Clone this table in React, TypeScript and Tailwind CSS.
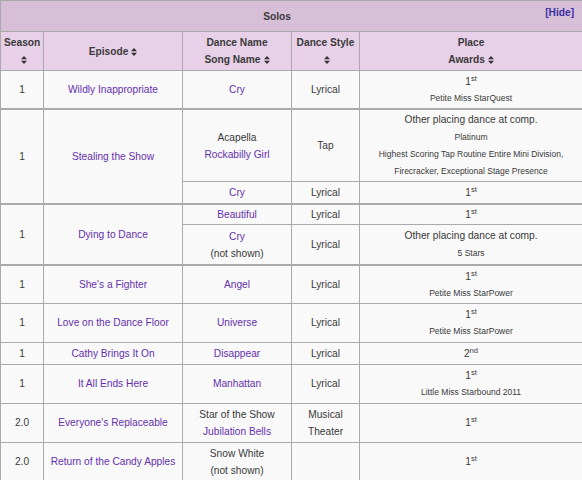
import React from "react";

const Sort = () => (
  <svg width="6" height="8" viewBox="0 0 6 8" className="inline-block align-[-1px] ml-[3px]">
    <polygon points="0,3.3 3,0 6,3.3" fill="#333" />
    <polygon points="0,4.7 6,4.7 3,8" fill="#333" />
  </svg>
);

const L = ({ children }: { children: React.ReactNode }) => (
  <span className="text-[#6530ad]">{children}</span>
);

const Sm = ({ children }: { children: React.ReactNode }) => (
  <div className="text-[8.5px] leading-[17px]">{children}</div>
);

const td = "border border-[#aaa] px-[4px] py-[2px] text-center align-middle";
const tdt = "border border-[#aaa] px-[4px] py-[1px] text-center align-middle";
const th = "border border-[#aaa] px-[3px] py-[2px] text-center align-middle font-bold bg-[#e8d1e8]";

export default function App() {
  return (
    <div className="w-[582px] bg-white" style={{ fontFamily: '"Liberation Sans", Arial, sans-serif' }}>
      <table className="w-[582px] table-fixed border-collapse bg-[#f9f9f9] text-[10.2px] leading-[17px] text-[#3a3a3a]">
        <colgroup>
          <col className="w-[43px]" />
          <col className="w-[139px]" />
          <col className="w-[109px]" />
          <col className="w-[68px]" />
          <col className="w-[223px]" />
        </colgroup>
        <thead>
          <tr className="h-[31px]">
            <th colSpan={5} className="border border-[#aaa] bg-[#d8bfd8] px-[8px] pt-[6px] pb-[6px] text-center font-bold">
              <span className="float-right mt-[-4px] text-[#3b2fa3]">[Hide]</span>
              Solos
            </th>
          </tr>
          <tr className="h-[39px]">
            <th className={th}>
              Season
              <br />
              <Sort />
            </th>
            <th className={th}>
              Episode
              <Sort />
            </th>
            <th className={th}>
              Dance Name
              <br />
              Song Name
              <Sort />
            </th>
            <th className={th}>
              Dance Style
              <br />
              <Sort />
            </th>
            <th className={th}>
              Place
              <br />
              Awards
              <Sort />
            </th>
          </tr>
        </thead>
        <tbody>
          <tr className="h-[38px]">
            <td className={td}>1</td>
            <td className={td}><L>Wildly Inappropriate</L></td>
            <td className={td}><L>Cry</L></td>
            <td className={td}>Lyrical</td>
            <td className={td}>
              <div>1<sup>st</sup></div>
              <div className="text-[8.5px] leading-[16px]">Petite Miss StarQuest</div>
            </td>
          </tr>
          <tr className="h-[72px]">
            <td rowSpan={2} className={tdt + " border-t-2"}>1</td>
            <td rowSpan={2} className={tdt + " border-t-2"}><L>Stealing the Show</L></td>
            <td className={tdt + " border-t-2"}>
              Acapella
              <br />
              <L>Rockabilly Girl</L>
            </td>
            <td className={tdt + " border-t-2"}>Tap</td>
            <td className={tdt + " border-t-2"}>
              <div className="leading-[18px]">Other placing dance at comp.</div>
              <Sm>Platinum</Sm>
              <Sm>Highest Scoring Tap Routine Entire Mini Division,</Sm>
              <Sm>Firecracker, Exceptional Stage Presence</Sm>
            </td>
          </tr>
          <tr className="h-[22px]">
            <td className={td}><L>Cry</L></td>
            <td className={td}>Lyrical</td>
            <td className={td}>1<sup>st</sup></td>
          </tr>
          <tr className="h-[20px]">
            <td rowSpan={2} className={tdt + " border-t-2"}>1</td>
            <td rowSpan={2} className={tdt + " border-t-2"}><L>Dying to Dance</L></td>
            <td className={tdt + " border-t-2"}><L>Beautiful</L></td>
            <td className={tdt + " border-t-2"}>Lyrical</td>
            <td className={tdt + " border-t-2"}>1<sup>st</sup></td>
          </tr>
          <tr className="h-[40px]">
            <td className={td}>
              <L>Cry</L>
              <br />
              (not shown)
            </td>
            <td className={td}>Lyrical</td>
            <td className={td}>
              <div className="leading-[18px]">Other placing dance at comp.</div>
              <Sm>5 Stars</Sm>
            </td>
          </tr>
          <tr className="h-[38px]">
            <td className={tdt + " border-t-2"}>1</td>
            <td className={tdt + " border-t-2"}><L>She's a Fighter</L></td>
            <td className={tdt + " border-t-2"}><L>Angel</L></td>
            <td className={tdt + " border-t-2"}>Lyrical</td>
            <td className={tdt + " border-t-2"}>
              <div>1<sup>st</sup></div>
              <div className="text-[8.5px] leading-[16px]">Petite Miss StarPower</div>
            </td>
          </tr>
          <tr className="h-[39px]">
            <td className={td}>1</td>
            <td className={td}><L>Love on the Dance Floor</L></td>
            <td className={td}><L>Universe</L></td>
            <td className={td}>Lyrical</td>
            <td className={td}>
              <div>1<sup>st</sup></div>
              <div className="text-[8.5px] leading-[16px]">Petite Miss StarPower</div>
            </td>
          </tr>
          <tr className="h-[22px]">
            <td className={td}>1</td>
            <td className={td}><L>Cathy Brings It On</L></td>
            <td className={td}><L>Disappear</L></td>
            <td className={td}>Lyrical</td>
            <td className={td}>2<sup>nd</sup></td>
          </tr>
          <tr className="h-[39px]">
            <td className={td}>1</td>
            <td className={td}><L>It All Ends Here</L></td>
            <td className={td}><L>Manhattan</L></td>
            <td className={td}>Lyrical</td>
            <td className={td}>
              <div>1<sup>st</sup></div>
              <div className="text-[8.5px] leading-[16px]">Little Miss Starbound 2011</div>
            </td>
          </tr>
          <tr className="h-[39px]">
            <td className={td}>2.0</td>
            <td className={td}><L>Everyone's Replaceable</L></td>
            <td className={td}>
              Star of the Show
              <br />
              <L>Jubilation Bells</L>
            </td>
            <td className={td}>
              Musical
              <br />
              Theater
            </td>
            <td className={td}>1<sup>st</sup></td>
          </tr>
          <tr className="h-[39px]">
            <td className={td}>2.0</td>
            <td className={td}><L>Return of the Candy Apples</L></td>
            <td className={td}>
              Snow White
              <br />
              (not shown)
            </td>
            <td className={td}></td>
            <td className={td}>1<sup>st</sup></td>
          </tr>
        </tbody>
      </table>
    </div>
  );
}
